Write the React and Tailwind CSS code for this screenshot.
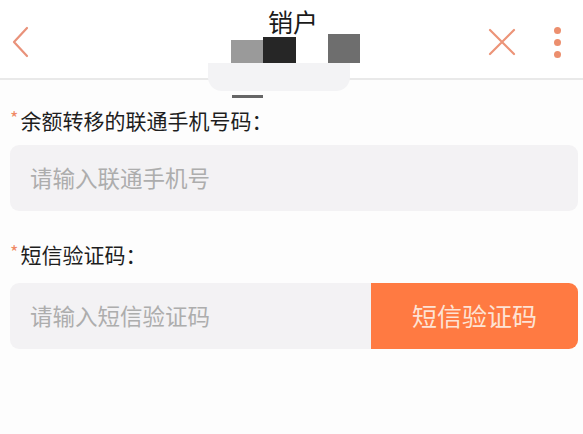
import React from "react";

export default function App() {
  return (
    <div className="w-[583px] h-[434px] bg-[#fdfdfd] overflow-hidden" style={{ fontFamily: '"Noto Sans CJK SC", "Noto Sans", sans-serif' }}>
      {/* Header */}
      <div className="relative h-[80px] border-b-2 border-[#e9e9e9] flex items-center justify-between pl-[10px] pr-[22px] bg-white">
        <svg width="22" height="34" viewBox="0 0 22 34" className="mt-[6px]">
          <path d="M17 3 L4 17 L17 31" fill="none" stroke="#e9927a" strokeWidth="2.2" strokeLinecap="round" strokeLinejoin="round" />
        </svg>
        <div className="absolute left-[268px] top-[3px] text-[25px] leading-[36px] text-[#1a1a1a]">销户</div>
        {/* censor blocks */}
        <div className="absolute left-[231px] top-[40px] w-[33px] h-[23px] bg-[#9a9a9a]" />
        <div className="absolute left-[263px] top-[37px] w-[33px] h-[26px] bg-[#262626]" />
        <div className="absolute left-[328px] top-[34px] w-[32px] h-[29px] bg-[#6e6e6e]" />
        <div className="absolute left-[208px] top-[63px] w-[142px] h-[28px] bg-[#f3f3f5] rounded-b-[14px]" />
        <div className="absolute left-[232px] top-[95px] w-[31px] h-[3px] bg-[#666]" />
        <div className="flex items-center gap-[38px] mt-[6px]">
          <svg width="28" height="28" viewBox="0 0 28 28">
            <path d="M2 2 L26 26 M26 2 L2 26" stroke="#ec9478" strokeWidth="2.2" strokeLinecap="round" />
          </svg>
          <div className="flex flex-col gap-[5px]">
            <div className="w-[7px] h-[7px] rounded-full bg-[#ec8f6e]" />
            <div className="w-[7px] h-[7px] rounded-full bg-[#ec8f6e]" />
            <div className="w-[7px] h-[7px] rounded-full bg-[#ec8f6e]" />
          </div>
        </div>
      </div>

      {/* Form */}
      <div className="px-[10px] pr-[5px]">
        <div className="mt-[25px] flex items-center text-[21px] leading-[30px] text-[#1e1e1e]">
          <span className="text-[#f08a66] text-[18px] -mt-[6px] mr-[2px]">*</span>
          <span>余额转移的联通手机号码：</span>
        </div>
        <div className="mt-[10px] h-[66px] rounded-[9px] bg-[#f3f2f4] flex items-center pl-[20px] text-[22.5px] text-[#adadad]">
          请输入联通手机号
        </div>

        <div className="mt-[28px] flex items-center text-[21px] leading-[30px] text-[#1e1e1e]">
          <span className="text-[#f08a66] text-[18px] -mt-[6px] mr-[2px]">*</span>
          <span>短信验证码：</span>
        </div>
        <div className="mt-[14px] h-[66px] rounded-[9px] overflow-hidden flex">
          <div className="w-[361px] bg-[#f3f2f4] flex items-center pl-[20px] text-[22.5px] text-[#adadad]">
            请输入短信验证码
          </div>
          <div className="flex-1 bg-[#ff7a42] flex items-center justify-center text-[25px] text-[#fde3d5]">
            短信验证码
          </div>
        </div>
      </div>
    </div>
  );
}
